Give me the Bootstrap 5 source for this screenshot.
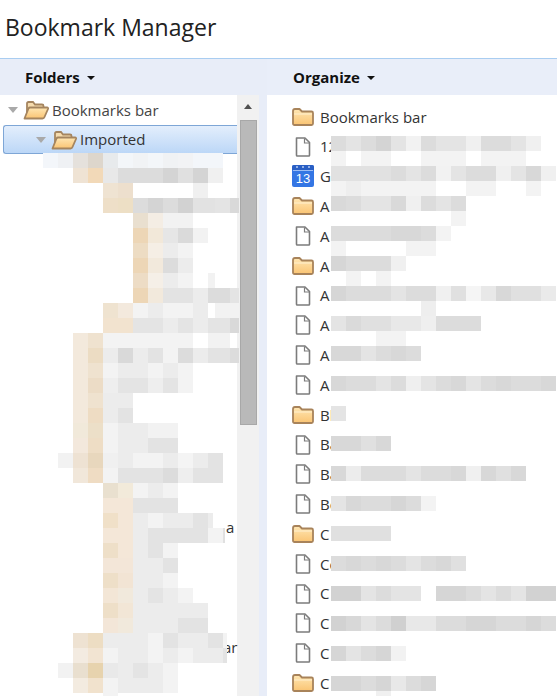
<!DOCTYPE html>
<html lang="en">

<head>
   <meta charset="UTF-8">
   <title>Bookmark Manager</title>
   <link href="https://cdn.jsdelivr.net/npm/bootstrap@5.3.0/dist/css/bootstrap.min.css" rel="stylesheet">
   <style>
      html, body { height: 100%; overflow: hidden; }
      body { font-family: "Open Sans", "Liberation Sans", sans-serif; color: #444; background: #fff; }
      .bm-head { height: 58px; padding: 9px 0 0 5px; font-size: 23px; line-height: 36px; color: #222; }
      .bm-tools { height: 37px; border-top: 1px solid #a9cdf1; background: #e8edf8; font-size: 15px; font-weight: 700; color: #111; }
      .bm-tool-l { width: 267px; padding: 0 0 0 25px; line-height: 37px; }
      .bm-tool-r { padding: 0 0 0 26px; line-height: 37px; background: #e9eef9; }
      .bm-tools .dropdown-toggle::after { margin-left: 7px; vertical-align: 3px; border-top-width: 4px; border-left-width: 4px; border-right-width: 4px; }
      .bm-main { height: 601px; }
      .bm-left { width: 267px; position: relative; overflow: hidden; }
      .bm-tree { width: 237px; font-size: 15px; }
      .bm-tree-row { height: 30px; }
      .bm-sel { margin: 0 -1px 0 3px; height: 29px; border: 1px solid #7ea6d6; border-right: 0; border-radius: 3px 0 0 3px; background: linear-gradient(#e3eefc, #bcd7f7); color: #333; }
      .bm-tri { flex: none; width: 0; height: 0; border-left: 5.5px solid transparent; border-right: 5.5px solid transparent; border-top: 6px solid #a9a9a9; }
      .bm-tri2 { margin-left: 32px; }
      .bm-open { flex: none; margin: 0 3px 0 5px; }
      .bm-scroll { width: 22px; background: #f1f1f1; position: relative; }
      .bm-up { width: 0; height: 0; margin: 9px auto 0; border-left: 4px solid transparent; border-right: 4px solid transparent; border-bottom: 5px solid #505050; }
      .bm-thumb { position: absolute; left: 3px; top: 25px; width: 17px; height: 305px; background: #b9b9b9; border: 1px solid #a8a8a8; }
      .bm-split { width: 8px; background: #e8edf8; }
      .bm-right { position: relative; overflow: hidden; padding-top: 7px; font-size: 15px; color: #333; }
      .bm-item { height: 29.8px; padding-left: 25px; gap: 6px; }
      .bm-ico { width: 22px; flex: none; display: block; }
      .bm-mosaic { position: absolute; pointer-events: none; }
      .bm-mosaic > div { display: flex; height: 15px; }
      .bm-mosaic span { flex: none; display: block; height: 15px; }
      #mosaic-l { left: 0; top: 58px; width: 239px; height: 543px; overflow: hidden; }
      #mosaic-r { left: 64px; top: 41px; right: 0; height: 560px; overflow: hidden; }
      .bm-frag { position: absolute; line-height: 20px; font-size: 15px; color: #333; }
      .bm-frag-a { left: 226px; top: 422px; }
      .bm-frag-b { left: 223px; top: 542px; }
   </style>
</head>

<body>
   <svg width="0" height="0" class="position-absolute">
      <defs>
         <linearGradient id="fold" x1="0" y1="0" x2="0" y2="1">
            <stop offset="0" stop-color="#ffe7b4"/>
            <stop offset="1" stop-color="#fac473"/>
         </linearGradient>
         <symbol id="i-open" viewBox="0 0 26 20">
            <path d="M4 17V3.500Q4 2 5.500 2H10l2 2.500h7Q20.500 4.500 20.500 6V7" fill="#f6dcae" stroke="#a5855f" stroke-width="1.800"/>
            <path d="M1.500 18.500L5.500 8.500Q6 7.500 7 7.500H24Q25.500 7.500 25 9L21.500 17Q21 18.500 19.500 18.500Z" fill="url(#fold)" stroke="#a5855f" stroke-width="1.800" stroke-linejoin="round"/>
         </symbol>
         <symbol id="i-fold" viewBox="0 0 22 18">
            <path d="M1 3Q1 1 3 1H7.500L10 3.500H19.500Q21 3.500 21 5V15.500Q21 17 19.500 17H2.500Q1 17 1 15.500Z" fill="url(#fold)" stroke="#a8835a" stroke-width="1.800" stroke-linejoin="round"/>
            <path d="M2 6H20" stroke="#fff0cf" stroke-width="1"/>
         </symbol>
         <symbol id="i-doc" viewBox="0 0 22 20">
            <path d="M4.500 1H13L17.500 5.500V18.200Q17.500 19 16.700 19H5.300Q4.500 19 4.500 18.200Z" fill="#fff" stroke="#7c7c7c" stroke-width="1.600" stroke-linejoin="round"/>
            <path d="M12.500 1.500V6H17" fill="none" stroke="#7c7c7c" stroke-width="1.200"/>
         </symbol>
      </defs>
   </svg>

   <div class="bm-head">Bookmark Manager</div>

   <div class="bm-tools d-flex">
      <div class="bm-tool-l"><span class="dropdown-toggle">Folders</span></div>
      <div class="bm-tool-r flex-grow-1"><span class="dropdown-toggle">Organize</span></div>
   </div>

   <div class="bm-main d-flex">
      <div class="bm-left d-flex">
         <div class="bm-tree">
            <div class="bm-tree-row d-flex align-items-center">
               <div class="bm-tri ms-2"></div>
               <svg width="26" height="20" class="bm-open"><use href="#i-open"/></svg>
               <span>Bookmarks bar</span>
            </div>
            <div class="bm-sel d-flex align-items-center">
               <div class="bm-tri bm-tri2"></div>
               <svg width="26" height="20" class="bm-open"><use href="#i-open"/></svg>
               <span>Imported</span>
            </div>
         </div>
         <div class="bm-scroll">
            <div class="bm-up"></div>
            <div class="bm-thumb"></div>
         </div>
         <div class="bm-split"></div>
         <span class="bm-frag bm-frag-a">a</span>
         <span class="bm-frag bm-frag-b">ar</span>
         <div class="bm-mosaic" id="mosaic-l"></div>
      </div>

      <div class="bm-right flex-grow-1" id="list">
         <div class="bm-mosaic" id="mosaic-r"></div>
      </div>
   </div>

   <script>
      // blurred tiles: two hex digits = grey, six = colour, __ = empty, *n = width
      const leftTiles = [
         [43, "f3f6fa eff1f4 e5e1dc ddd6cc e7eaec f3f6f9 f1f3f5 f3f6f9 f0f2f4 f2f3f5 f3f6fa f3f6fa"],
         [73, "efe3d4 f2d9b8 e8 dc dc dc d4 e0 d4 f0"],
         [103, "efe3d2 eddfcd __ __ __ __ f0"],
         [103, "eedfc8 eddfc5 dc d4 dc d2 e2 e2*7 e4 d9*9"],
         [133, "e9dfcf f4ede4 f2 f2"],
         [133, "edd6b6 f2e8d9 e6 da f2"],
         [133, "eddcc3 f5eee5 ec f3"],
         [133, "edd6b6 f2e9dc dc ec"],
         [133, "eddcc5 f5efe7 ec f3 __ f2*7"],
         [133, "edd6b6 f2e9dc e3 e3 ec dc*7 dc e4*9"],
         [103, "efe3d0 f3e9dd f3 ec f3 f3 ec ff*7 f2 f2*9"],
         [103, "f2e3cf f2e3cf e4 e4 ec e4 ec e4*7 e4 d9*9"],
         [73, "f3e9dc efe2cf f3 f3 f3 f3 f3 f3 ff f2*7 f2"],
         [73, "f3e9dc ecdcc3 ec d9 ec e3 f3 dc ec e3*7 e3 dc*9"],
         [73, "f3e9dc efe2cf f3 ec ec f3 ec f3"],
         [73, "f3e9dc ecdcc6 ee e4 e4 ee e4 f3"],
         [73, "f3e9dc efe2cf ec ec"],
         [73, "f3e9dc eedcc3 ec e3"],
         [73, "f1e9da ecdfc8 f3 ec ec f2 f2"],
         [73, "f3e8dc eeddc5 f3 ec ec e3 e3"],
         [58, "f2 eee2d3 e8d7bd f0 ec f3 f3 ec f4 ec e3"],
         [73, "f1e7da efdcc3 f3 e3 e3 e3 dc ee e3 e3"],
         [103, "e9e0cf f2eada f3 ec f3"],
         [103, "f4e7d8 f4e7d8 e3 e3 e3"],
         [103, "f0e0c8 f4e7d8 ec f3 ec ec e3 ec*5"],
         [103, "f4e7d8 f4e7d8 ec e3 e3 e3 e3 f3 e0*2"],
         [103, "eedfc8 f4e7d8 ec e3 f3"],
         [103, "f3e6d8 f3e6d8 ec ec e3"],
         [103, "eedfc8 f2e4d4 ec ec f3"],
         [103, "f3e6d6 f1e9dc ec e4 ec f3"],
         [103, "eedfc8 f2e6d6 ec ec ec ec ec"],
         [103, "f3e6d8 f1e9dc ec ec ec e3 e3"],
         [73, "eee2d2 edddc3 ec ec ec f3 e3 ec ec e3 f3*4"],
         [73, "f3ebe1 f2e4d2 f3 ec ec f3 ec f3 ec ec e3*4"],
         [58, "f2 e9dfcf e7d3ae e9 ec e4 ec f3"],
         [73, "f3ebe0 f1e2cd f3 ec ec ec f3"],
         [103, "f3"]
      ];
      const rightTiles = [
         "dc e4 dc d4 e4 f2 dc e4 e4 f0 dc dc e4 f0",
         "f3 __ f3 f3 __ __ f3 f3 f3 __ f3 f3 f3",
         "e1 e1 e1 e1 dc e4 dc f2 e4 dc dc f0 e4 d8 f0",
         "f3 ee f3 f3 f3 f3 f3 __ __ f3 f3 __ __ f3",
         "d9 dc e4 e4 d9 f0 dc e4 dc",
         "__ __ __ __ __ __ __ __ f3",
         "dc dc dc dc d8 d8 dc f3",
         "f3 __ __ __ __ f3 f3",
         "d6 dc dc dc f0",
         "__ f3 __ f3",
         "d6 dc dc dc e4 dc dc f0 e0 f5 e8 d8 e0 e0 ea",
         "__ __ __ __ __ __ ee",
         "e4 da e0 e0 e8 e8 ef dc dc dc",
         "__ __ __ f3 f3",
         "d8 d8 e4 dc d8 dc",
         "",
         "d8 dc dc e4 dc ef e4 dc d8 e4 dc d8 dc dc d8",
         "",
         "e4",
         "",
         "d8 d8 e0 d8",
         "",
         "d8 ec dc dc dc e4 dc dc d8 f0 d8 e0 d8",
         "",
         "e4 d8 dc dc d6 dc f3",
         "",
         "e0 e0 e0 e0",
         "",
         "dc d8 dc d8 dc e4 dc d8 e0",
         "",
         "d2 d2 e4 dc e4 e4 __ d6 d6 dc e4 dc e4 d2 d2",
         "",
         "d2 d8 e4 dc d0 e8 e8 dc dc d6 d6 dc dc d6 dc",
         "",
         "d6 e4 dc d6 f2",
         "",
         "d6 d6 dc d6 e8 dc d6",
         "__ __ __ f0"
      ];

      function drawTiles(box, rows) {
         rows.forEach(([x, list]) => {
            const row = document.createElement("div");
            row.style.paddingLeft = x + "px";
            list.split(" ").filter(Boolean).forEach(t => {
               const [c, w] = t.split("*");
               const cell = document.createElement("span");
               cell.style.width = (w || 15) + "px";
               if (c !== "__") cell.style.background = "#" + (c.length === 2 ? c + c + c : c);
               row.appendChild(cell);
            });
            box.appendChild(row);
         });
      }

      drawTiles(document.getElementById("mosaic-l"), leftTiles);
      drawTiles(document.getElementById("mosaic-r"), rightTiles.map(r => [0, r]));

      const items = [
         ["fold", "Bookmarks bar"], ["doc", "12"], ["cal", "G"], ["fold", "A"], ["doc", "A"],
         ["fold", "A"], ["doc", "A"], ["doc", "A"], ["doc", "A"], ["doc", "A"],
         ["fold", "Bl"], ["doc", "Ba"], ["doc", "Ba"], ["doc", "Be"], ["fold", "C"],
         ["doc", "Cc"], ["doc", "C"], ["doc", "C"], ["doc", "C"], ["fold", "C"]
      ];
      const cal = `<svg class="bm-ico" width="22" height="22" viewBox="0 0 22 22">
         <rect x="0" y="0" width="22" height="22" rx="2" fill="#3476e4"/>
         <path d="M0 2Q0 0 2 0H20Q22 0 22 2V5H0Z" fill="#2a5fc4"/>
         <circle cx="5" cy="2" r="1" fill="#b8cdf2"/>
         <circle cx="11" cy="2" r="1" fill="#b8cdf2"/>
         <circle cx="17" cy="2" r="1" fill="#b8cdf2"/>
         <rect x="1" y="5" width="20" height="1" fill="#9dbdf2"/>
         <text x="11" y="18" text-anchor="middle" font-family="Liberation Sans, sans-serif" font-size="13" fill="#fff">13</text>
      </svg>`;
      const list = document.getElementById("list");
      items.forEach(([type, label]) => {
         const ico = type === "cal" ? cal
            : type === "fold" ? `<svg class="bm-ico" width="22" height="18"><use href="#i-fold"/></svg>`
            : `<svg class="bm-ico" width="22" height="20"><use href="#i-doc"/></svg>`;
         const row = document.createElement("div");
         row.className = "bm-item d-flex align-items-center";
         row.innerHTML = ico + `<span>${label}</span>`;
         list.appendChild(row);
      });
   </script>
</body>

</html>
